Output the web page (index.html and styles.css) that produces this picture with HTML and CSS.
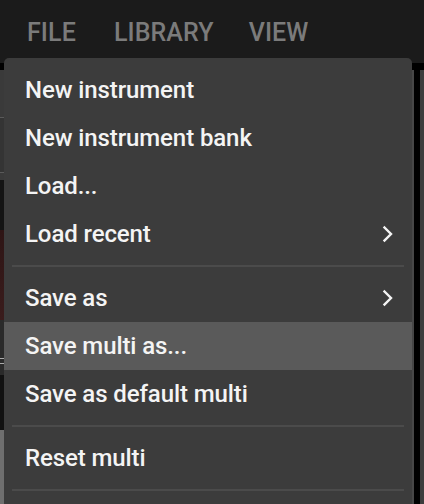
FILE: index.html
```html
<!DOCTYPE html>
<html>
<head>
<meta charset="utf-8">
<link rel="stylesheet" href="styles.css">
</head>
<body>
<div class="app">
  <header class="topbar">
    <span class="tab">FILE</span>
    <span class="tab">LIBRARY</span>
    <span class="tab tab-last">VIEW</span>
  </header>
  <div class="rule"></div>
  <div class="workspace">
    <div class="leftarea">
      <div class="blk blk-panel"></div>
      <div class="blk blk-box"></div>
      <div class="blk blk-panel2"></div>
      <div class="blk blk-dark"></div>
      <div class="blk blk-red"></div>
      <div class="blk blk-mid"><span class="grip"></span></div>
      <div class="blk blk-black"></div>
      <div class="blk blk-light"></div>
    </div>
    <div class="edge-a"></div>
    <div class="edge-b"></div>
    <div class="edge-c"></div>
  </div>

  <nav class="menu">
    <div class="item">New instrument</div>
    <div class="item">New instrument bank</div>
    <div class="item">Load...</div>
    <div class="item">Load recent
      <svg class="chev" width="12" height="18" viewBox="0 0 12 18"><polyline points="2.5,2.5 9,9 2.5,15.5" fill="none" stroke="#f4f4f4" stroke-width="2.4" stroke-linecap="square"/></svg>
    </div>
    <div class="sep"></div>
    <div class="item">Save as
      <svg class="chev" width="12" height="18" viewBox="0 0 12 18"><polyline points="2.5,2.5 9,9 2.5,15.5" fill="none" stroke="#f4f4f4" stroke-width="2.4" stroke-linecap="square"/></svg>
    </div>
    <div class="item hover">Save multi as...</div>
    <div class="item">Save as default multi</div>
    <div class="sep"></div>
    <div class="item">Reset multi</div>
    <div class="sep"></div>
  </nav>
</div>
</body>
</html>
```

FILE: styles.css
```css
html, body {
  margin: 0;
  padding: 0;
  background: #1b1b1b;
}
body {
  width: 424px;
  height: 504px;
  overflow: hidden;
  font-family: Roboto, "Liberation Sans", sans-serif;
}
.app {
  position: relative;
  width: 424px;
  height: 504px;
  display: flex;
  flex-direction: column;
}
.topbar {
  height: 63px;
  background: #1b1b1b;
  display: flex;
  align-items: flex-start;
  padding-left: 27px;
  box-sizing: border-box;
  padding-top: 18px;
  gap: 38px;
}
.tab {
  color: #7b7b7b;
  font-size: 25px;
  font-weight: 500;
  line-height: 30px;
  letter-spacing: 0.1px;
}
.tab-last {
  margin-left: -3px;
}
.rule {
  height: 7px;
  background: #000;
}
.workspace {
  flex: 1;
  display: flex;
}
.leftarea {
  width: 412px;
  display: flex;
  flex-direction: column;
}
.blk { width: 100%; }
.blk-panel { height: 47px; background: #3a3a3a; }
.blk-box {
  height: 56px;
  background: #343434;
  border-top: 1px solid #5a5a5a;
  border-bottom: 1px solid #5a5a5a;
  box-sizing: border-box;
}
.blk-panel2 { height: 7px; background: #3a3a3a; }
.blk-dark { height: 50px; background: #141414; }
.blk-red { height: 90px; background: linear-gradient(#2e1515, #3a1c1c); }
.blk-mid { height: 55px; background: #2a2a2a; position: relative; }
.grip {
  position: absolute;
  left: 0;
  top: 38px;
  width: 4px;
  height: 4px;
  border-top: 1px solid #aaa;
  border-bottom: 1px solid #aaa;
}
.blk-black { height: 55px; background: #111; }
.blk-light { flex: 1; background: #6f6f6f; }
.edge-a { width: 2px; background: #474747; }
.edge-b { width: 6px; background: #000; }
.edge-c { width: 4px; background: #3d3d3d; }

.menu {
  position: absolute;
  left: 4px;
  top: 58px;
  width: 408px;
  height: 460px;
  background: #3c3c3c;
  border-radius: 5px 5px 0 0;
  padding-top: 8px;
  box-sizing: border-box;
}
.item {
  height: 48px;
  display: flex;
  align-items: center;
  justify-content: space-between;
  padding: 0 18px 0 21px;
  color: #f4f4f4;
  font-size: 24px;
  font-weight: 500;
  line-height: 28px;
  letter-spacing: -0.1px;
  box-sizing: border-box;
}
.item.hover {
  background: #5a5a5a;
}
.chev {
  display: block;
}
.sep {
  height: 2px;
  margin: 7px 8px 7px 8px;
  background: #4b4b4b;
}
```
